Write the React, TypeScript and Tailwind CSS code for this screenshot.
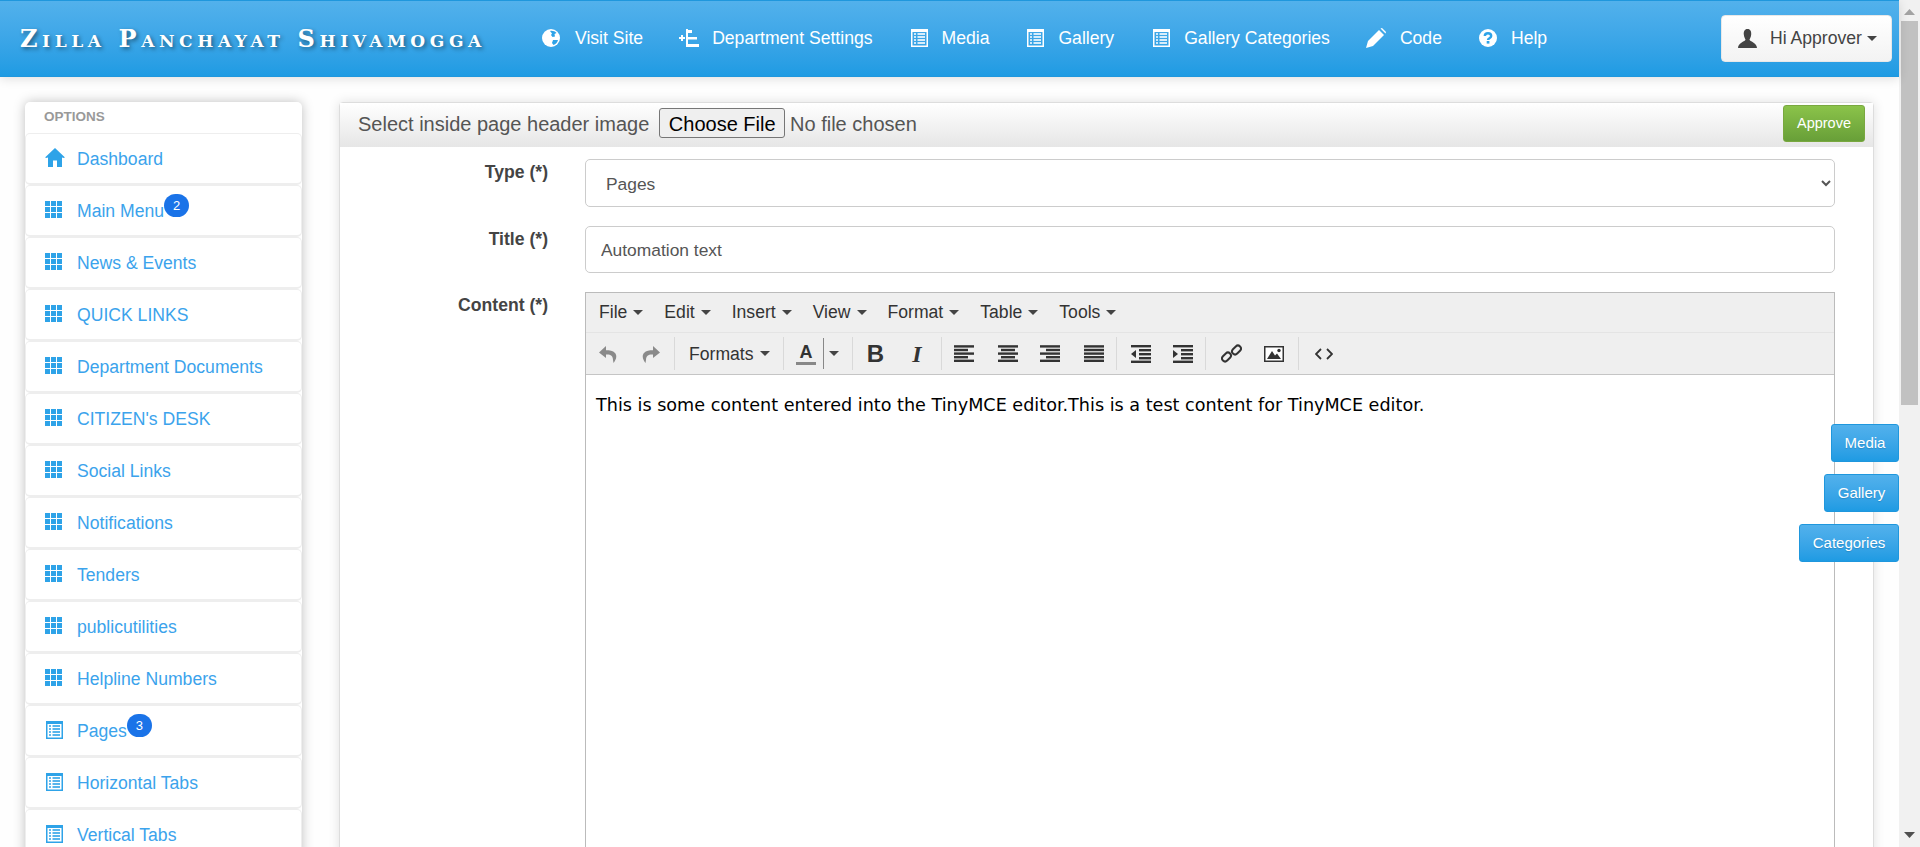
import React from "react";

const sans = "font-['Liberation_Sans',Arial,sans-serif]";

function Th({ className = "" }: { className?: string }) {
  const cells = [0, 6, 12];
  return (
    <svg width="17" height="17" viewBox="0 0 17 17" className={className} fill="currentColor">
      {cells.map((y) => cells.map((x) => <rect key={`${x}-${y}`} x={x} y={y} width="5" height="5" />))}
    </svg>
  );
}

function ListAlt({ className = "" }: { className?: string }) {
  return (
    <svg width="17" height="18" viewBox="0 0 17 18" className={className} fill="none" stroke="currentColor">
      <rect x="0.75" y="0.75" width="15.5" height="16.5" strokeWidth="1.5" />
      <rect x="0" y="0" width="17" height="3" fill="currentColor" stroke="none" />
      {[5, 8, 11, 14].map((y) => (
        <g key={y} strokeWidth="1.6">
          <line x1="3" x2="5" y1={y} y2={y} />
          <line x1="6.5" x2="14" y1={y} y2={y} />
        </g>
      ))}
    </svg>
  );
}

function Home({ className = "" }: { className?: string }) {
  return (
    <svg width="20" height="19" viewBox="0 0 20 19" className={className} fill="currentColor">
      <path d="M10 0 L20 9.5 L18 10 L17 9.3 V19 H12 V12.5 H8 V19 H3 V9.3 L2 10 L0 9.5 Z" />
    </svg>
  );
}

function Globe() {
  return (
    <svg width="18" height="18" viewBox="0 0 18 18">
      <circle cx="9" cy="9" r="9" fill="#fff" />
      <path d="M8 2 C10 1.5 13 2 14.5 4 L12.5 5 L13 7.5 L10.5 8 L9 6 L10 4.5 Z" fill="#2ea3e8" />
      <path d="M11 11 L16 11 C15.5 13.5 13.5 15.5 11.5 16 L10 14 Z" fill="#2ea3e8" />
    </svg>
  );
}

function Tree() {
  return (
    <svg width="20" height="18" viewBox="0 0 20 18" fill="#fff">
      <rect x="0" y="8" width="6" height="2" />
      <rect x="2" y="6" width="2" height="6" />
      <rect x="7" y="0" width="2" height="18" />
      <rect x="9" y="1" width="4" height="3" />
      <rect x="9" y="8" width="9" height="2.5" />
      <rect x="9" y="15" width="11" height="3" />
    </svg>
  );
}

function Pencil() {
  return (
    <svg width="20" height="20" viewBox="0 0 20 20" fill="#fff">
      <path d="M0 20 L2 13 L13 2 L18 7 L7 18 Z" />
      <path d="M14.5 0.5 L16 0 L20 4 L19.5 5.5 Z" />
    </svg>
  );
}

function Question() {
  return (
    <svg width="18" height="18" viewBox="0 0 18 18">
      <circle cx="9" cy="9" r="9" fill="#fff" />
      <path d="M5.8 7 C5.8 3.4 12.2 3.4 12.2 7 C12.2 9.4 9 9 9 11" fill="none" stroke="#2ea3e8" strokeWidth="2.4" />
      <rect x="7.7" y="12" width="2.7" height="2.6" fill="#2ea3e8" />
    </svg>
  );
}

function User() {
  return (
    <svg width="19" height="19" viewBox="0 0 19 19" fill="#444">
      <path d="M9.5 0 C12.5 0 13.5 2.5 13.2 5.5 C13 8 12 9.5 11.5 10.5 C11.5 12.5 19 13.5 19 19 H0 C0 13.5 7.5 12.5 7.5 10.5 C7 9.5 6 8 5.8 5.5 C5.5 2.5 6.5 0 9.5 0 Z" />
    </svg>
  );
}

function Caret() {
  return <span className="inline-block w-0 h-0 border-x-transparent border-x-[5px] border-t-[5px] border-t-[#444]" />;
}

function Bars({ rows }: { rows: [number, number][] }) {
  return (
    <svg width="20" height="18" viewBox="0 0 20 18" fill="#333">
      {rows.map(([x, w], i) => (
        <rect key={i} x={x} y={i * 3.6 + 0.2} width={w} height="2.4" />
      ))}
    </svg>
  );
}

function Undo({ flip = false }: { flip?: boolean }) {
  return (
    <svg width="18" height="18" viewBox="0 0 18 18" fill="#8a8a8a" className={flip ? "-scale-x-100" : ""}>
      <path d="M7 1 L0 7.5 L7 13 V9.5 C11 9 14 10.5 14 15 L14.5 18 C17 15 18.5 11 16 8 C14 5.5 10.5 5.2 7 5.2 Z" />
    </svg>
  );
}

const menu: { label: string; icon: "home" | "th" | "list"; badge?: string }[] = [
  { label: "Dashboard", icon: "home" },
  { label: "Main Menu", icon: "th", badge: "2" },
  { label: "News & Events", icon: "th" },
  { label: "QUICK LINKS", icon: "th" },
  { label: "Department Documents", icon: "th" },
  { label: "CITIZEN's DESK", icon: "th" },
  { label: "Social Links", icon: "th" },
  { label: "Notifications", icon: "th" },
  { label: "Tenders", icon: "th" },
  { label: "publicutilities", icon: "th" },
  { label: "Helpline Numbers", icon: "th" },
  { label: "Pages", icon: "list", badge: "3" },
  { label: "Horizontal Tabs", icon: "list" },
  { label: "Vertical Tabs", icon: "list" },
];

const nav: { label: string; icon: React.ReactNode; cls: string }[] = [
  { label: "Visit Site", icon: <Globe />, cls: "gap-[15px]" },
  { label: "Department Settings", icon: <Tree />, cls: "gap-[13px]" },
  { label: "Media", icon: <ListAlt />, cls: "gap-[14px] ml-[2px]" },
  { label: "Gallery", icon: <ListAlt />, cls: "gap-[14px] ml-[2px]" },
  { label: "Gallery Categories", icon: <ListAlt />, cls: "gap-[14px] ml-[3px]" },
  { label: "Code", icon: <Pencil />, cls: "gap-[14px]" },
  { label: "Help", icon: <Question />, cls: "gap-[14px] ml-[1px]" },
];

function Sep({ cls = "" }: { cls?: string }) {
  return <span className={`w-px h-[33px] bg-[#d9d9d9] mr-[2px] shrink-0 ${cls}`} />;
}

function Btn({ children, cls = "" }: { children: React.ReactNode; cls?: string }) {
  return <span className={`w-[43px] h-[33px] flex items-center justify-center shrink-0 ${cls}`}>{children}</span>;
}

function SideBtn({ label, w }: { label: string; w: string }) {
  return (
    <button className={`${w} h-[38px] rounded-[3px] border border-[#1f97dd] bg-gradient-to-b from-[#52b1ec] to-[#1e9be3] text-white text-[15px] [text-shadow:0_1px_1px_rgba(0,0,0,0.15)]`}>
      {label}
    </button>
  );
}

export default function App() {
  return (
    <div className={`${sans} flex h-[847px] w-full overflow-hidden bg-white`}>
      <div className="relative flex-1 min-w-0 flex flex-col">
        <header className="h-[77px] shrink-0 flex items-center pl-[20px] pr-[7px] border-y border-[#1f97dd] bg-gradient-to-b from-[#52b1ec] to-[#1e9be3] shadow-[0_2px_10px_rgba(0,0,0,0.12)] z-10">
          <div className="w-[463px] font-['DejaVu_Serif',serif] font-bold text-[24px] [font-variant:small-caps] tracking-[4.6px] text-white whitespace-nowrap [text-shadow:2px_2px_4px_rgba(0,0,0,0.45)]">
            Zilla Panchayat Shivamogga
          </div>
          <nav className="ml-[59px] flex items-center gap-[36px] text-white text-[17.6px]">
            {nav.map((n) => (
              <a key={n.label} className={`flex items-center whitespace-nowrap ${n.cls}`}>
                {n.icon}
                <span>{n.label}</span>
              </a>
            ))}
          </nav>
          <button className="ml-auto w-[171px] h-[47px] rounded-[4px] border border-[#e8e8e8] bg-gradient-to-b from-white to-[#f3f3f3] flex items-center pl-[16px] text-[#444] text-[17.6px]">
            <User />
            <span className="ml-[13px]">Hi Approver</span>
            <span className="ml-[5px] flex"><Caret /></span>
          </button>
        </header>

        <div className="flex-1 min-h-0 flex items-start pl-[25px] pt-[25px] gap-[37px] bg-[#fefefe]">
          <aside className="w-[277px] shrink-0 bg-white rounded-[5px] shadow-[0_0_12px_rgba(0,0,0,0.25)]">
            <div className="h-[31px] pl-[19px] flex items-center text-[13.5px] font-bold text-[#999]">OPTIONS</div>
            {menu.map((m) => (
              <a key={m.label} className="h-[52px] flex items-center pl-[19px] border border-b-2 border-[#eee] rounded-[5px] text-[#3ba3ec] text-[17.6px] whitespace-nowrap">
                <span className="w-[32px] shrink-0 flex text-[#2ea3e8] -mt-[2px]">
                  {m.icon === "home" ? <Home /> : m.icon === "th" ? <Th /> : <ListAlt className="ml-[1px]" />}
                </span>
                <span className="pt-[1px]">{m.label}</span>
                {m.badge && (
                  <span className="relative -top-[5px] w-[25px] h-[23px] rounded-full bg-[#1a73e8] text-white text-[13px] flex items-center justify-center">
                    {m.badge}
                  </span>
                )}
              </a>
            ))}
          </aside>

          <main className="w-[1535px] h-[800px] shrink-0 bg-white border border-[#ddd] rounded-t-[4px] shadow-[0_0_12px_rgba(0,0,0,0.12)]">
            <div className="h-[44px] flex items-center pl-[18px] pr-[8px] pb-[3px] bg-gradient-to-b from-white to-[#e6e6e6] text-[#555] text-[20px]">
              <span>Select inside page header image</span>
              <input
                type="file"
                className="ml-[10px] file:h-[30px] file:px-[8.5px] file:mr-[5px] file:border file:border-[#767676] file:rounded-[3px] file:bg-[#efefef] file:text-black"
              />
              <button className="ml-auto w-[82px] h-[37px] rounded-[3px] border border-[#79a83f] bg-gradient-to-b from-[#8bc34a] to-[#689f38] text-white text-[14.5px]">
                Approve
              </button>
            </div>

            <div className="grid grid-cols-[208px_1fr] gap-x-[37px] pt-[12px] pr-[38px]">
              <label className="text-right font-bold text-[#444] text-[17.6px]">Type (*)</label>
              <select className="h-[48px] w-full pl-[16px] pr-[4px] pt-[2px] border border-[#ccc] rounded-[5px] bg-white text-[#555] text-[17.4px]">
                <option>Pages</option>
              </select>

              <label className="mt-[19px] text-right font-bold text-[#444] text-[17.6px]">Title (*)</label>
              <input
                readOnly
                value="Automation text"
                className="mt-[19px] h-[47px] w-full px-[15px] pt-[2px] border border-[#ccc] rounded-[5px] bg-white text-[#555] text-[17.4px]"
              />

              <label className="mt-[19px] text-right font-bold text-[#444] text-[17.6px]">Content (*)</label>
              <div className="mt-[19px] w-full h-[600px] border border-[#bbb] bg-white">
                <div className="h-[40px] flex items-center pl-[13px] gap-[21px] bg-[#efefef] border-b border-[#e4e4e4] text-[#333] text-[17.6px]">
                  {["File", "Edit", "Insert", "View", "Format", "Table", "Tools"].map((t) => (
                    <span key={t} className="flex items-center gap-[6px]">
                      {t}
                      <Caret />
                    </span>
                  ))}
                </div>
                <div className="h-[42px] flex items-center pl-[2px] bg-[#efefef] border-b border-[#c5c5c5]">
                  <Btn cls="pr-[3px]"><Undo /></Btn>
                  <Btn cls="pr-[3px]"><Undo flip /></Btn>
                  <Sep />
                  <span className="w-[106px] shrink-0 pl-[12px] pt-[1px] flex items-center gap-[6px] text-[#333] text-[17.6px]">
                    Formats <Caret />
                  </span>
                  <Sep />
                  <span className="w-[66px] shrink-0 h-[33px] flex items-center pl-[10px]">
                    <span className="flex flex-col items-center w-[20px] font-bold text-[#333] text-[18px] leading-[19px]">
                      A
                      <span className="w-[20px] h-[3px] bg-[#888]" />
                    </span>
                    <span className="w-px h-[31px] bg-[#888] ml-[7px]" />
                    <span className="ml-[5px] flex"><Caret /></span>
                  </span>
                  <Sep />
                  <Btn cls="pr-[2px]"><span className="font-bold text-[#333] text-[24px] leading-none">B</span></Btn>
                  <Btn cls="pr-[5px]"><span className="font-bold italic text-[#333] text-[24px] leading-none font-['Liberation_Serif',serif]">I</span></Btn>
                  <Sep />
                  <Btn cls="pr-[3px]"><Bars rows={[[0, 20], [0, 14], [0, 20], [0, 14], [0, 20]]} /></Btn>
                  <Btn cls="pr-[2px]"><Bars rows={[[0, 20], [3, 14], [0, 20], [3, 14], [0, 20]]} /></Btn>
                  <Btn cls="pr-[4px]"><Bars rows={[[0, 20], [6, 14], [0, 20], [6, 14], [0, 20]]} /></Btn>
                  <Btn cls="pr-[2px]"><Bars rows={[[0, 20], [0, 20], [0, 20], [0, 20], [0, 20]]} /></Btn>
                  <Sep />
                  <Btn>
                    <svg width="20" height="18" viewBox="0 0 20 18" fill="#333">
                      <rect x="0" y="0" width="20" height="2.4" />
                      <rect x="8" y="4" width="12" height="2.4" />
                      <rect x="8" y="8" width="12" height="2.4" />
                      <rect x="8" y="12" width="12" height="2.4" />
                      <rect x="0" y="15.6" width="20" height="2.4" />
                      <path d="M5 5 V13 L0 9 Z" />
                    </svg>
                  </Btn>
                  <Btn cls="pr-[2px]">
                    <svg width="20" height="18" viewBox="0 0 20 18" fill="#333">
                      <rect x="0" y="0" width="20" height="2.4" />
                      <rect x="8" y="4" width="12" height="2.4" />
                      <rect x="8" y="8" width="12" height="2.4" />
                      <rect x="8" y="12" width="12" height="2.4" />
                      <rect x="0" y="15.6" width="20" height="2.4" />
                      <path d="M0 5 V13 L5 9 Z" />
                    </svg>
                  </Btn>
                  <Sep />
                  <Btn cls="pl-[4px]">
                    <svg width="21" height="21" viewBox="0 0 21 21" fill="none" stroke="#333" strokeWidth="2">
                      <rect x="0.5" y="11" width="10" height="6" rx="3" transform="rotate(-45 5.5 14)" />
                      <rect x="10.5" y="4" width="10" height="6" rx="3" transform="rotate(-45 15.5 7)" />
                    </svg>
                  </Btn>
                  <Btn cls="pl-[2px]">
                    <svg width="20" height="16" viewBox="0 0 20 16">
                      <rect x="0.75" y="0.75" width="18.5" height="14.5" fill="#fff" stroke="#333" strokeWidth="1.5" />
                      <path d="M3 13 L8 5 L11 9.5 L13 7.5 L17 13 Z" fill="#333" />
                      <circle cx="15" cy="4.5" r="1.7" fill="#333" />
                    </svg>
                  </Btn>
                  <Sep cls="ml-[4px]" />
                  <Btn cls="pl-[2px]">
                    <svg width="18" height="12" viewBox="0 0 18 12" fill="none" stroke="#333" strokeWidth="1.8">
                      <path d="M6 1 L1 6 L6 11" />
                      <path d="M12 1 L17 6 L12 11" />
                    </svg>
                  </Btn>
                </div>
                <div className="pt-[17px] pl-[10px] font-['DejaVu_Sans',Verdana,sans-serif] text-[17.6px] text-black">
                  This is some content entered into the TinyMCE editor.This is a test content for TinyMCE editor.
                </div>
              </div>
            </div>
          </main>
        </div>

        <div className="absolute right-0 top-[424px] flex flex-col items-end gap-[12px] z-20">
          <SideBtn label="Media" w="w-[68px]" />
          <SideBtn label="Gallery" w="w-[75px]" />
          <SideBtn label="Categories" w="w-[100px]" />
        </div>
      </div>

      <div className="w-[21px] shrink-0 bg-[#f1f1f1] flex flex-col items-center relative">
        <svg width="11" height="6" viewBox="0 0 11 6" className="mt-[9px]" fill="#a3a3a3"><path d="M5.5 0 L11 6 H0 Z" /></svg>
        <div className="mt-[6px] w-[17px] h-[384px] bg-[#c1c1c1]" />
        <svg width="11" height="6" viewBox="0 0 11 6" className="mt-auto mb-[9px]" fill="#505050"><path d="M0 0 H11 L5.5 6 Z" /></svg>
      </div>
    </div>
  );
}
